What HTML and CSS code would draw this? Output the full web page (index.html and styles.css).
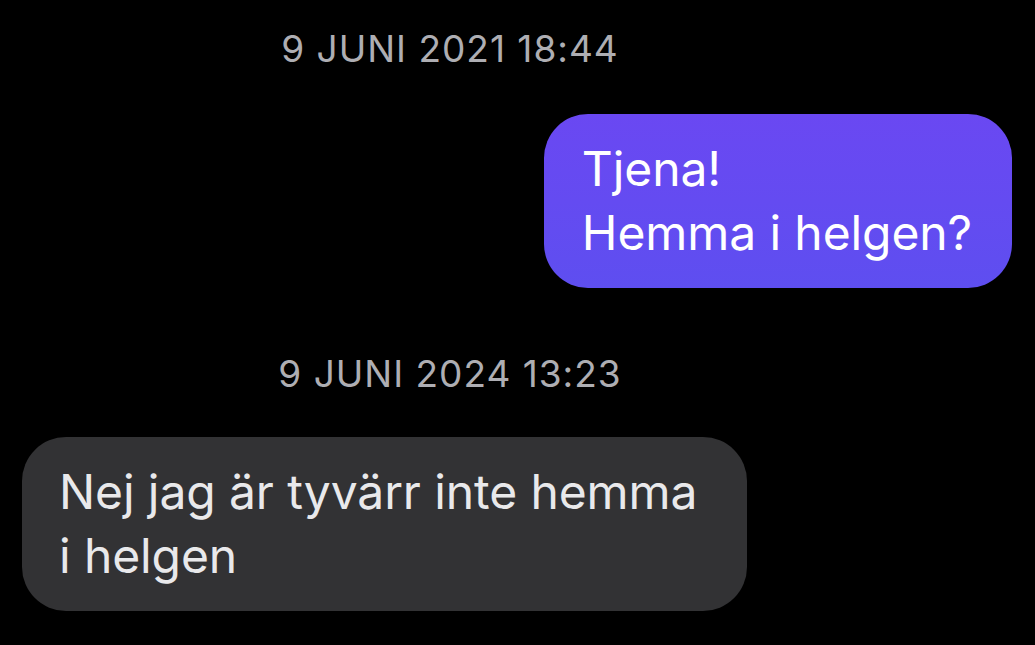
FILE: index.html
```html
<!DOCTYPE html>
<html lang="sv">
<head>
    <meta charset="UTF-8">
    <meta name="viewport" content="width=device-width, initial-scale=1.0">
    <title>Meddelanden</title>
    <link rel="stylesheet" href="styles.css">
</head>
<body>
    <div class="thread">
        <div class="timestamp">9 JUNI 2021 18:44</div>
        <div class="message outgoing">
            <div class="bubble">Tjena!<br>Hemma i helgen?</div>
        </div>

        <div class="timestamp later">9 JUNI 2024 13:23</div>
        <div class="message incoming">
            <div class="bubble">Nej jag är tyvärr inte hemma i helgen</div>
        </div>
    </div>
</body>
</html>
```

FILE: styles.css
```css
body {
    margin: 0;
    padding: 0;
    background: #000;
    font-family: Inter, "Noto Sans", "Liberation Sans", sans-serif;
    height: 100vh;
    overflow: hidden;
}

.thread {
    display: flex;
    flex-direction: column;
    padding: 27px 23px 0 22px;
}

.timestamp {
    margin-right: 134px;
    text-align: center;
    font-size: 37px;
    line-height: 44px;
    color: #aeaeb3;
    letter-spacing: 1px;
}

.timestamp.later {
    margin-top: 64px;
}

.message {
    display: flex;
}

.message.outgoing {
    justify-content: flex-end;
    margin-top: 43px;
}

.message.incoming {
    justify-content: flex-start;
    margin-top: 41px;
}

.bubble {
    box-sizing: border-box;
    font-size: 48px;
    line-height: 64px;
    letter-spacing: -0.1px;
    padding: 23px 40px 23px 38px;
    border-radius: 44px;
    max-width: 725px;
}

.outgoing .bubble {
    background: linear-gradient(180deg, #6a48f2 0%, #5e4ef0 100%);
    color: #fff;
}

.incoming .bubble {
    width: 725px;
    background: #323234;
    color: #e9e9eb;
    padding-left: 37px;
}
```
